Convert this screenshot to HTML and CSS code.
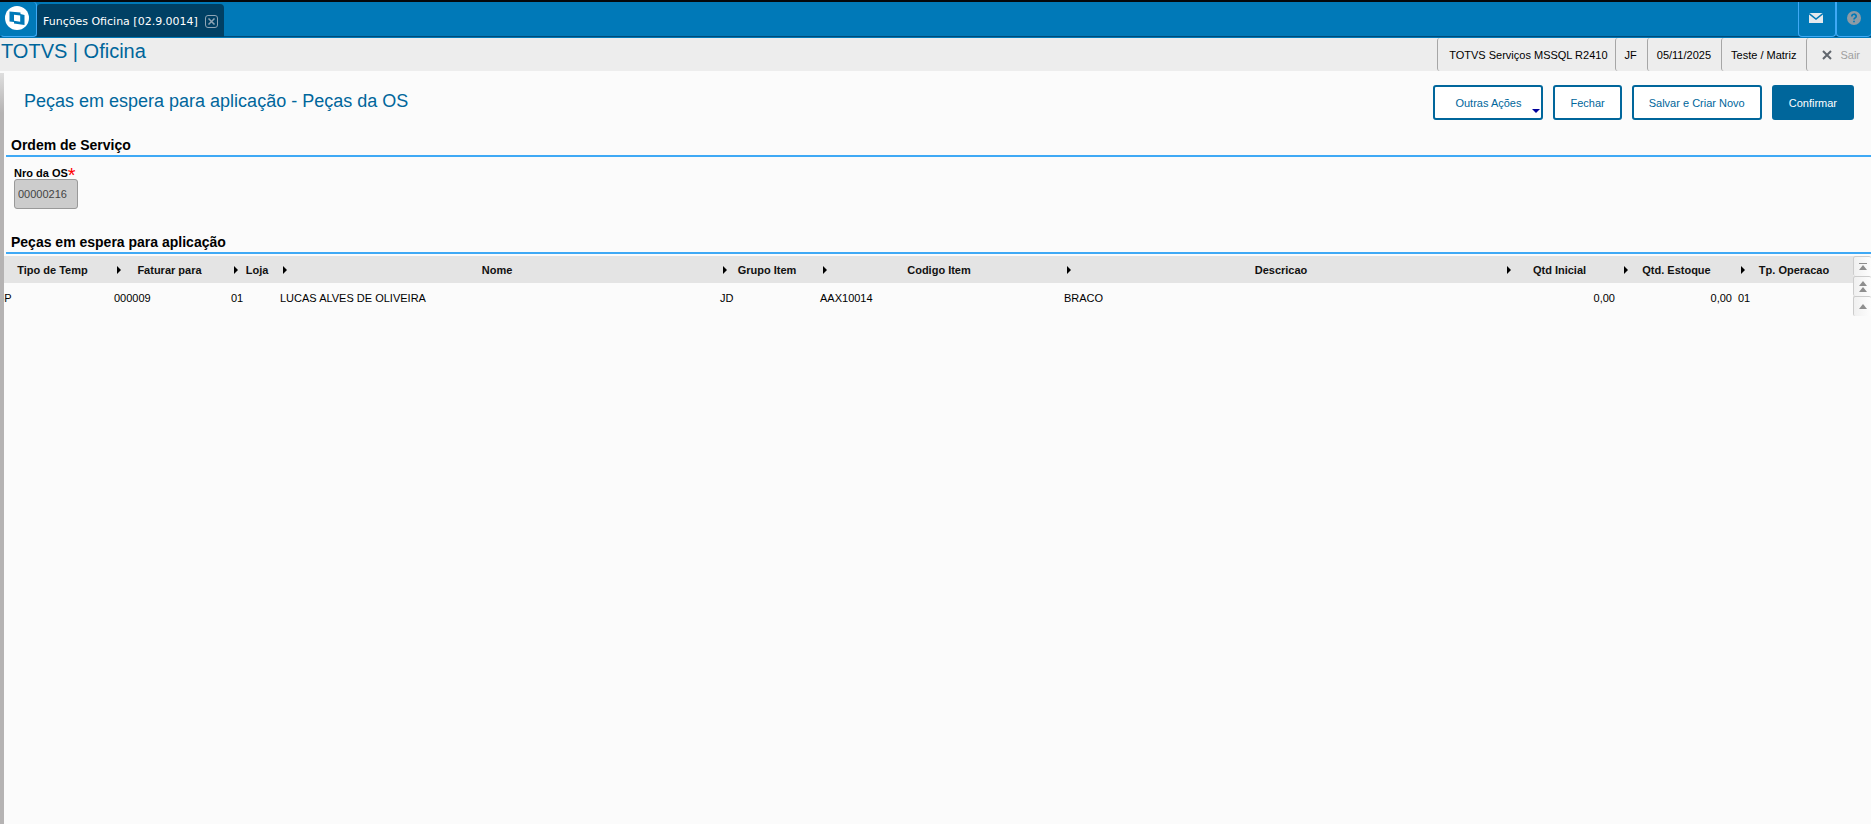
FILE: index.html
```html
<!DOCTYPE html>
<html lang="pt-BR">
<head>
    <meta charset="UTF-8">
    <title>TOTVS | Oficina</title>
    <link rel="stylesheet" href="styles.css">
</head>
<body>
    <nav class="topbar">
        <button class="logo" type="button" aria-label="Menu">
            <svg width="26" height="26" viewBox="0 0 26 26">
                <circle cx="13" cy="13" r="12" fill="#fff"/>
                <path d="M5.500 6.500 L16.500 7.500 V9 L20.500 10 V20 L10 18.500 V17 L5.500 16.500 Z" fill="#0079b8"/>
                <path d="M10 9.800 L16.200 10.600 V16.800 L10 15.800 Z" fill="#fff"/>
            </svg>
        </button>
        <div class="tab">
            <span>Funções Oficina [02.9.0014]</span>
            <button class="tab-close" type="button" aria-label="Fechar aba">
                <svg width="13" height="13" viewBox="0 0 13 13" fill="none" stroke="#8fa5b5">
                    <rect x="0.500" y="0.500" width="12" height="12" rx="2.500"/>
                    <path d="M3.500 3.500 L9.500 9.500 M9.500 3.500 L3.500 9.500" stroke-width="1.500"/>
                </svg>
            </button>
        </div>
        <div class="tools">
            <button type="button" class="tool" aria-label="Mensagens">
                <svg width="14" height="10" viewBox="0 0 14 10">
                    <rect width="14" height="10" fill="#e4e9ed"/>
                    <path d="M0 0.500 L7 6 L14 0.500" fill="none" stroke="#0079b8" stroke-width="1.500"/>
                </svg>
            </button>
            <button type="button" class="tool" aria-label="Ajuda">
                <svg width="14" height="14" viewBox="0 0 14 14">
                    <circle cx="7" cy="7" r="7" fill="#8d9ba5"/>
                    <path d="M4.800 5.500 C4.800 2.500 9.200 2.500 9.200 5.300 C9.200 6.900 7 6.800 7 8.500 M7 9.700 V11.300" fill="none" stroke="#0079b8" stroke-width="1.700"/>
                </svg>
            </button>
        </div>
    </nav>

    <header class="header">
        <h1>TOTVS | Oficina</h1>
        <div class="status">
            <span class="env">TOTVS Serviços MSSQL R2410</span>
            <span>JF</span>
            <span>05/11/2025</span>
            <span>Teste / Matriz</span>
            <button type="button" class="exit">
                <svg width="10" height="10" viewBox="0 0 10 10"><path d="M1 1 L9 9 M9 1 L1 9" stroke="#60666d" stroke-width="2"/></svg>
                Sair
            </button>
        </div>
    </header>

    <main class="page">
        <div class="title-bar">
            <h2>Peças em espera para aplicação - Peças da OS</h2>
            <div class="actions">
                <button type="button" class="btn btn-menu">Outras Ações</button>
                <button type="button" class="btn">Fechar</button>
                <button type="button" class="btn">Salvar e Criar Novo</button>
                <button type="button" class="btn btn-primary">Confirmar</button>
            </div>
        </div>

        <section class="order">
            <h3>Ordem de Serviço</h3>
            <div class="field">
                <label for="nroOs">Nro da OS<span class="required">*</span></label>
                <input type="text" id="nroOs" value="00000216" readonly>
            </div>
        </section>

        <section class="parts">
            <h3>Peças em espera para aplicação</h3>
            <div class="grid">
                <div class="grid-view">
                    <table>
                        <colgroup>
                            <col class="c-std">
                            <col class="c-std">
                            <col class="c-loja">
                            <col class="c-text">
                            <col class="c-grupo">
                            <col class="c-codigo">
                            <col class="c-text">
                            <col class="c-std">
                            <col class="c-std">
                            <col>
                        </colgroup>
                        <thead>
                            <tr>
                                <th>Tipo de Temp</th>
                                <th>Faturar para</th>
                                <th class="narrow">Loja</th>
                                <th>Nome</th>
                                <th>Grupo Item</th>
                                <th>Codigo Item</th>
                                <th>Descricao</th>
                                <th>Qtd Inicial</th>
                                <th>Qtd. Estoque</th>
                                <th>Tp. Operacao</th>
                            </tr>
                        </thead>
                        <tbody>
                            <tr>
                                <td>SP</td>
                                <td>000009</td>
                                <td>01</td>
                                <td>LUCAS ALVES DE OLIVEIRA</td>
                                <td>JD</td>
                                <td>AAX10014</td>
                                <td>BRACO</td>
                                <td class="num">0,00</td>
                                <td class="num">0,00</td>
                                <td>01</td>
                            </tr>
                        </tbody>
                    </table>
                </div>
                <div class="scroller">
                    <button type="button" aria-label="Primeira linha">
                        <svg width="8" height="8" viewBox="0 0 8 8" fill="#8e8e8e"><path d="M0 0 H8 V1 H0 Z M4 2 L8 7 H0 Z"/></svg>
                    </button>
                    <button type="button" aria-label="Página anterior">
                        <svg width="8" height="12" viewBox="0 0 8 12" fill="#8e8e8e"><path d="M4 0 L8 5 H0 Z M4 6 L8 11 H0 Z"/></svg>
                    </button>
                    <button type="button" aria-label="Linha anterior">
                        <svg width="8" height="6" viewBox="0 0 8 6" fill="#8e8e8e"><path d="M4 0 L8 5 H0 Z"/></svg>
                    </button>
                </div>
            </div>
        </section>
    </main>
</body>
</html>
```
FILE: styles.css
```css
* {
    box-sizing: border-box;
}

body {
    margin: 0;
    min-height: 100vh;
    display: flex;
    flex-direction: column;
    background: #fbfbfb;
    color: #000;
    font-family: "Liberation Sans", Arial, sans-serif;
    font-size: 11px;
}

h1, h2, h3 {
    margin: 0;
}

button {
    font-family: inherit;
    font-size: inherit;
    cursor: pointer;
}

/* top bar */
.topbar {
    display: flex;
    height: 38px;
    background: #0079b8;
    border-top: 2px solid #05080c;
    box-shadow: inset 0 -1px 0 #0079b8, inset 0 -2px 0 #004b78;
}

.logo {
    width: 37px;
    height: 35px;
    padding: 0 3px 2px 0;
    display: flex;
    align-items: center;
    justify-content: center;
    background: #0079b8;
    border: 1px solid #3fa9f5;
    border-top: none;
    border-left-color: #0079b8;
    border-radius: 4px;
}

.tab {
    display: flex;
    align-items: center;
    gap: 7px;
    height: 33px;
    margin-top: 2px;
    padding: 1px 6px 0;
    background: #004064;
    border-radius: 4px 4px 0 0;
    color: #fff;
    font-family: "DejaVu Sans", Verdana, sans-serif;
    font-size: 11px;
}

.tab-close {
    display: flex;
    padding: 0;
    background: none;
    border: none;
}

.tools {
    display: flex;
    margin-left: auto;
}

.tool {
    width: 38px;
    height: 35px;
    padding: 0 2px 2px 0;
    display: flex;
    align-items: center;
    justify-content: center;
    background: none;
    border: 1px solid #3fa9f5;
    border-top: none;
    border-radius: 0 0 4px 4px;
}

.tool:last-child {
    width: 35px;
    padding-right: 0;
    border-right: none;
}

/* header */
.header {
    display: flex;
    justify-content: space-between;
    height: 33px;
    background: #ededed;
}

.header h1 {
    padding-left: 1px;
    color: #00669b;
    font-size: 20px;
    font-weight: normal;
    line-height: 26px;
}

.status {
    display: flex;
}

.status > * {
    display: flex;
    align-items: center;
    padding: 0 10px 0 9px;
    background: none;
    border: none;
    border-left: 1px solid #a6a6a6;
    border-radius: 3px;
}

.status .env {
    padding-left: 11px;
    padding-right: 7px;
}

.status .exit {
    gap: 8px;
    padding-left: 15px;
    padding-right: 11px;
    color: #a0a0a0;
}

/* content */
.page {
    flex: 1;
    margin-top: 2px;
    padding-left: 4px;
    background: linear-gradient(to bottom, #dedede, #b5b3b3 40px) no-repeat left / 4px 100%;
}

.title-bar {
    display: flex;
    align-items: center;
    justify-content: space-between;
    padding: 12px 17px 0 20px;
}

.title-bar h2 {
    padding-bottom: 2px;
    color: #00669b;
    font-size: 18px;
    font-weight: normal;
}

.actions {
    display: flex;
    gap: 10px;
}

.btn {
    height: 35px;
    padding: 0 15px;
    background: #fff;
    border: 2px solid #00669b;
    border-radius: 3px;
    color: #00669b;
}

.btn-menu {
    position: relative;
    padding: 0 20px;
}

.btn-menu::after {
    content: "";
    position: absolute;
    right: 1px;
    bottom: 5px;
    border: 4px solid transparent;
    border-top-color: #00009c;
    border-bottom: none;
}

.btn-primary {
    background: #00669b;
    color: #fff;
}

h3 {
    margin-left: 2px;
    padding: 0 5px 2px;
    border-bottom: 2px solid #3fa9f5;
    font-size: 14px;
    line-height: 16px;
}

.order {
    padding-top: 17px;
}

.field {
    display: flex;
    flex-direction: column;
    align-items: flex-start;
    padding: 10px 10px 0;
}

.field label {
    font-weight: bold;
    line-height: 12px;
}

.required {
    color: #f00;
    font-size: 20px;
    font-weight: normal;
    line-height: 0;
    vertical-align: -5px;
}

.field input {
    width: 64px;
    height: 30px;
    padding: 0 3px;
    background: #ccc;
    border: 1px solid #999;
    border-radius: 3px;
    color: #444;
    font-family: inherit;
    font-size: 11px;
}

.parts {
    padding-top: 25px;
}

/* parts grid */
.grid {
    display: flex;
    margin-top: 2px;
}

.grid-view {
    flex: 1;
    min-width: 0;
    overflow: hidden;
}

/* the grid is scrolled a little to the right */
table {
    width: calc(100% + 10px);
    margin-left: -10px;
    table-layout: fixed;
    border-collapse: collapse;
}

.c-std {
    width: 117px;
}

.c-loja {
    width: 49px;
}

.c-text {
    width: 440px;
}

.c-grupo {
    width: 100px;
}

.c-codigo {
    width: 244px;
}

th, td {
    height: 27px;
    padding: 0 3px;
    text-align: left;
    white-space: nowrap;
}

th {
    position: relative;
    background: #e4e4e4;
    color: #111;
    text-align: center;
}

th.narrow {
    padding-left: 12px;
}

th + th::before {
    content: "";
    position: absolute;
    left: 6px;
    top: 10px;
    border: 4px solid transparent;
    border-left-color: #000;
    border-right: none;
}

td {
    height: 29px;
}

.num {
    text-align: right;
}

.scroller {
    display: flex;
    flex-direction: column;
    width: 18px;
}

.scroller button {
    display: flex;
    align-items: center;
    justify-content: center;
    height: 20px;
    padding: 0;
    background: linear-gradient(to right, #f0f0f0, #fdfdfd);
    border: none;
    border-top: 1px solid #ccc;
    border-left: 1px solid #ccc;
    border-radius: 2px;
}
```
